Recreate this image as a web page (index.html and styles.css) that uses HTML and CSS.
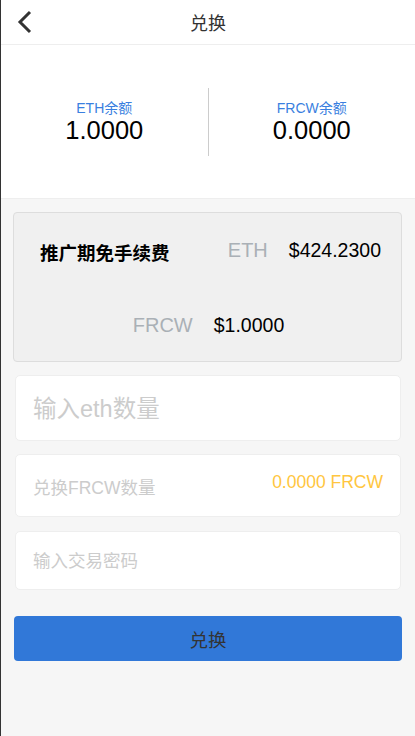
FILE: index.html
```html
<!DOCTYPE html>
<html lang="zh">
<head>
<meta charset="utf-8">
<link rel="stylesheet" href="styles.css">
</head>
<body>
<div class="page">
  <header class="topbar">
    <span class="back"><svg width="16" height="24" viewBox="0 0 16 24"><path d="M13 2 L3 12 L13 22" fill="none" stroke="#333" stroke-width="3"/></svg></span>
    <span class="title">兑换</span>
  </header>
  <section class="balances">
    <div class="bal">
      <div class="bal-label">ETH余额</div>
      <div class="bal-value">1.0000</div>
    </div>
    <div class="divider"></div>
    <div class="bal">
      <div class="bal-label">FRCW余额</div>
      <div class="bal-value">0.0000</div>
    </div>
  </section>
  <main class="content">
    <div class="card">
      <div class="row1">
        <span class="promo">推广期免手续费</span>
        <span class="coin">ETH</span>
        <span class="price">$424.2300</span>
      </div>
      <div class="row2">
        <span class="coin">FRCW</span>
        <span class="price">$1.0000</span>
      </div>
    </div>
    <div class="field f1"><span class="ph big">输入eth数量</span></div>
    <div class="field f2"><span class="ph mid">兑换FRCW数量</span><span class="amount">0.0000 FRCW</span></div>
    <div class="field f3"><span class="ph small">输入交易密码</span></div>
    <div class="btn">兑换</div>
  </main>
</div>
</body>
</html>
```
FILE: styles.css
```css
html, body { margin: 0; padding: 0; }
body {
  font-family: "Liberation Sans", Arial, "Noto Sans CJK SC", sans-serif;
  background: #f6f6f6;
}
.page {
  width: 415px;
  height: 736px;
  box-sizing: border-box;
  border-left: 1px solid #333;
  background: #f6f6f6;
  display: flex;
  flex-direction: column;
}
.topbar {
  height: 44px;
  background: #fff;
  border-bottom: 1px solid #eee;
  display: flex;
  align-items: center;
  justify-content: center;
  position: relative;
}
.back {
  position: absolute;
  left: 16px;
  top: 10px;
  display: flex;
}
.title { font-size: 18px; color: #333; }
.balances {
  height: 153px;
  background: #fff;
  border-bottom: 1px solid #eee;
  display: flex;
  align-items: center;
}
.bal { flex: 1; text-align: center; }
.divider { width: 1px; height: 68px; background: #ccc; }
.bal-label { font-size: 14px; color: #3a7fe0; line-height: 16px; }
.bal-value { font-size: 25.5px; color: #000; line-height: 28px; }
.content {
  padding: 13px 13px 0 12px;
  display: flex;
  flex-direction: column;
}
.card {
  height: 150px;
  flex: none;
  background: #f0f0f0;
  border: 1px solid #ddd;
  border-radius: 4px;
  box-sizing: border-box;
  padding: 24px 20px 0 26px;
  margin-bottom: 13px;
}
.row1 { display: flex; align-items: center; height: 26px; }
.promo { font-size: 18.5px; font-weight: bold; color: #000; margin-top: 4px; }
.coin { font-size: 20px; color: #aab0b6; }
.price { font-size: 19.5px; color: #000; }
.row1 .coin { margin-left: auto; margin-right: 21px; }
.row2 { display: flex; align-items: center; justify-content: center; margin-top: 49px; height: 26px; padding-right: 4px; }
.row2 .coin { margin-right: 21px; }
.field {
  flex: none;
  background: #fff;
  border: 1px solid #eee;
  border-radius: 5px;
  margin: 0 1px 13px 2px;
  box-sizing: border-box;
  display: flex;
  align-items: center;
  padding: 0 17px;
}
.f1 { height: 66px; }
.f2 { height: 63px; margin-bottom: 14px; }
.f3 { height: 59px; margin-bottom: 26px; }
.ph { color: #ccc; }
.big { font-size: 23.5px; margin-top: -3px; }
.mid { font-size: 17.5px; margin-top: 1px; }
.small { font-size: 17.5px; margin-top: -3px; }
.amount { margin-left: auto; color: #ffc640; font-size: 17.5px; margin-top: -6px; }
.btn {
  flex: none;
  height: 45px;
  background: #3178d8;
  border-radius: 4px;
  margin: 0 0 0 1px;
  display: flex;
  align-items: center;
  justify-content: center;
  font-size: 18.5px;
  color: #333;
}
```
